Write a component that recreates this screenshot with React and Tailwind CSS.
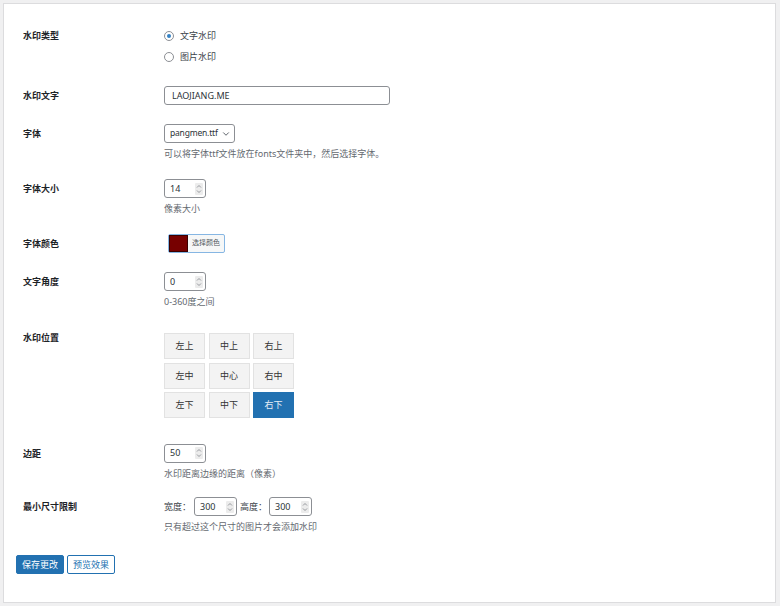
import { ChevronDown } from "lucide-react";

const font = "font-['Noto_Sans','Noto_Sans_CJK_SC',sans-serif]";

function Spinner() {
  return (
    <span className="flex h-[12px] w-[8px] items-center justify-center rounded-[1px] bg-[#ececec]">
      <svg width="6" height="10" viewBox="0 0 6 10" fill="none" stroke="#8c8f94" strokeWidth="0.9">
        <path d="M1 3.5 L3 1.5 L5 3.5" />
        <path d="M1 6.5 L3 8.5 L5 6.5" />
      </svg>
    </span>
  );
}

function NumberBox({ value, className = "" }) {
  return (
    <div
      className={`flex h-[19px] w-[42px] items-center justify-between rounded-[3px] border border-[#8c8f94] bg-white pl-[5px] pr-[2px] text-[9px] text-[#2c3338] ${className}`}
    >
      <span>{value}</span>
      <Spinner />
    </div>
  );
}

function Label({ children, className = "leading-[19px]" }) {
  return (
    <div className={`w-[141px] shrink-0 text-[9px] font-semibold text-[#1d2327] ${className}`}>
      {children}
    </div>
  );
}

function Hint({ children }) {
  return <p className="mt-[4px] text-[9px] leading-[13px] text-[#646970]">{children}</p>;
}

function Radio({ checked, label }) {
  return (
    <label className="flex h-[14px] items-center gap-[6px] text-[9px] text-[#3c434a]">
      <span className="flex h-[10px] w-[10px] items-center justify-center rounded-full border border-[#8c8f94] bg-white">
        {checked ? <span className="h-[4px] w-[4px] rounded-full bg-[#3582c4]" /> : null}
      </span>
      {label}
    </label>
  );
}

const positions = ["左上", "中上", "右上", "左中", "中心", "右中", "左下", "中下", "右下"];

export default function App() {
  return (
    <div className={`h-[606px] w-[780px] bg-[#f0f0f1] pl-[3px] pt-[3px] ${font}`}>
      <div className="h-[600px] w-[773px] border border-[#dcdcde] bg-white pt-[25px]">
        <div className="pl-[19px]">
          <div className="flex">
            <Label className="leading-[14px]">水印类型</Label>
            <div className="flex flex-col gap-[7px]">
              <Radio checked label="文字水印" />
              <Radio label="图片水印" />
            </div>
          </div>

          <div className="mt-[22px] flex">
            <Label>水印文字</Label>
            <div className="flex h-[19px] w-[226px] items-center rounded-[3px] border border-[#8c8f94] pl-[7px] text-[9px] text-[#2c3338]">
              LAOJIANG.ME
            </div>
          </div>

          <div className="mt-[19px] flex">
            <Label>字体</Label>
            <div>
              <div className="flex h-[19px] w-[71px] items-center justify-between rounded-[3px] border border-[#8c8f94] pl-[5px] pr-[3px] text-[8.5px] text-[#2c3338]">
                <span className="tracking-[-0.2px]">pangmen.ttf</span>
                <ChevronDown size={10} strokeWidth={2.2} color="#50575e" className="shrink-0" />
              </div>
              <Hint>可以将字体ttf文件放在fonts文件夹中，然后选择字体。</Hint>
            </div>
          </div>

          <div className="mt-[19px] flex">
            <Label>字体大小</Label>
            <div>
              <NumberBox value="14" />
              <Hint>像素大小</Hint>
            </div>
          </div>

          <div className="mt-[19px] flex">
            <Label>字体颜色</Label>
            <div className="ml-[4px] flex h-[19px] items-stretch rounded-[2px] border border-[#86b6e3] bg-[#f6f7f7]">
              <span className="w-[19px] border border-[#3a0000] bg-[#770000]" />
              <span className="flex items-center px-[4px] text-[7px] text-[#50575e]">选择颜色</span>
            </div>
          </div>

          <div className="mt-[19px] flex">
            <Label>文字角度</Label>
            <div>
              <NumberBox value="0" />
              <Hint>0-360度之间</Hint>
            </div>
          </div>

          <div className="mt-[20px] flex">
            <Label>水印位置</Label>
            <div className="mt-[5px] grid grid-cols-[41px_41px_41px] gap-x-[3.5px] gap-y-[3.5px]">
              {positions.map((p) => (
                <div
                  key={p}
                  className={`flex h-[26px] items-center justify-center border text-[9px] ${
                    p === "右下"
                      ? "border-[#2271b1] bg-[#2271b1] text-[#e6eef6]"
                      : "border-[#e2e2e2] bg-[#f3f3f3] text-[#333]"
                  }`}
                >
                  {p}
                </div>
              ))}
            </div>
          </div>

          <div className="mt-[25.5px] flex">
            <Label>边距</Label>
            <div>
              <NumberBox value="50" />
              <Hint>水印距离边缘的距离（像素）</Hint>
            </div>
          </div>

          <div className="mt-[17.5px] flex">
            <Label>最小尺寸限制</Label>
            <div>
              <div className="flex items-center text-[9px] text-[#3c434a]">
                <span className="w-[30px]">宽度：</span>
                <NumberBox value="300" className="w-[43px]" />
                <span className="ml-[3px] w-[29px]">高度：</span>
                <NumberBox value="300" className="w-[43px]" />
              </div>
              <Hint>只有超过这个尺寸的图片才会添加水印</Hint>
            </div>
          </div>
        </div>

        <div className="mt-[22px] flex gap-[3px] pl-[12px]">
          <button className="flex h-[19px] w-[48px] items-center justify-center rounded-[2px] border border-[#2271b1] bg-[#2271b1] text-[9px] text-white">
            保存更改
          </button>
          <button className="flex h-[19px] w-[48px] items-center justify-center rounded-[2px] border border-[#2271b1] bg-white text-[9px] text-[#2271b1]">
            预览效果
          </button>
        </div>
      </div>
    </div>
  );
}
